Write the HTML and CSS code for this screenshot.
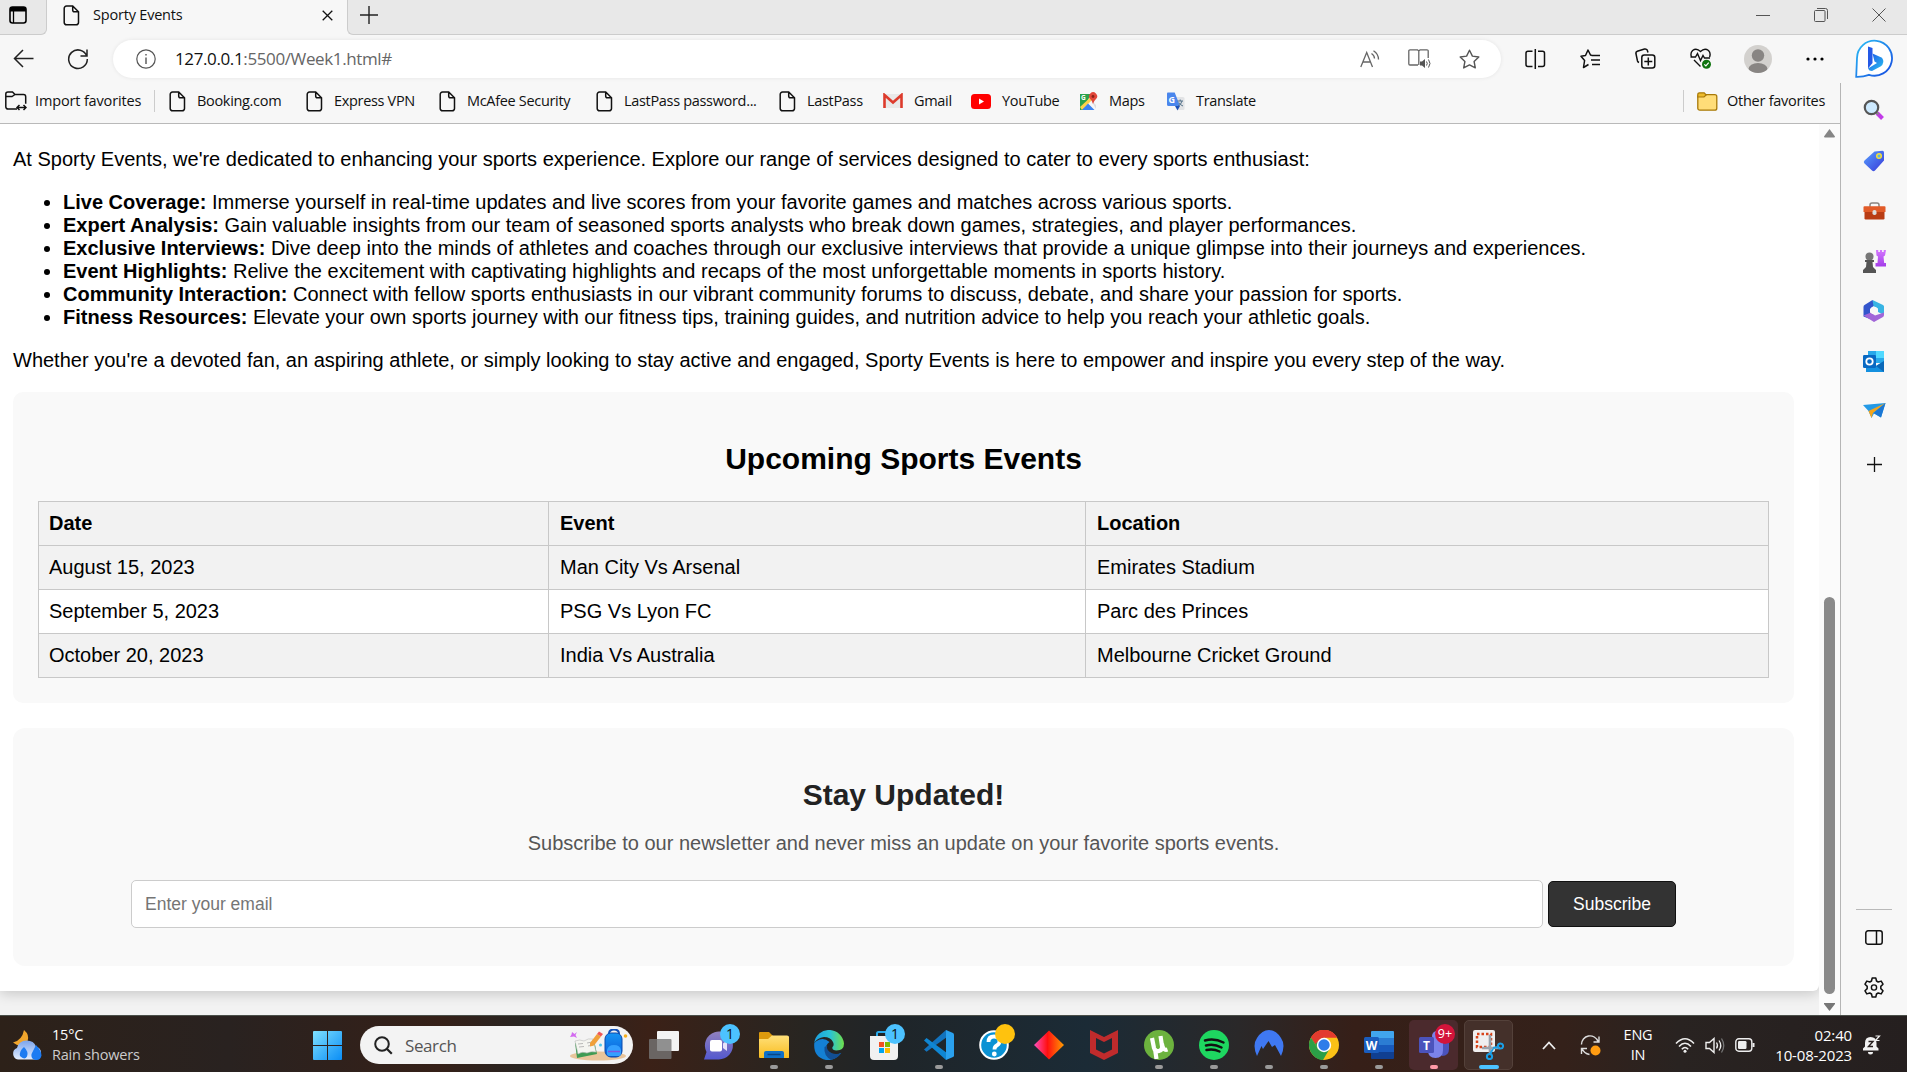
FILE: index.html
```html
<!DOCTYPE html>
<html lang="en">
<head>
<meta charset="utf-8">
<title>Sporty Events</title>
<link rel="stylesheet" href="styles.css">
</head>
<body>
<svg class="defs" width="0" height="0" aria-hidden="true">
  <defs>
    <symbol id="page" viewBox="0 0 17 21"><path d="M3.5 1h6.2L15.500 6.800V17.500a2.300 2.300 0 0 1-2.300 2.300H3.500a2.300 2.300 0 0 1-2.300-2.300V3.300A2.300 2.300 0 0 1 3.500 1zM9.700 1v4.300a1.500 1.500 0 0 0 1.500 1.500h4.300" fill="none" stroke="#111" stroke-width="1.500"/></symbol>
    <linearGradient id="winG" x1="0" y1="0" x2="1" y2="1"><stop offset="0" stop-color="#7fe0ff"/><stop offset="1" stop-color="#0a8df5"/></linearGradient>
    <linearGradient id="folderG" x1="0" y1="0" x2="0" y2="1"><stop offset="0" stop-color="#ffe07a"/><stop offset="1" stop-color="#f9bd1f"/></linearGradient>
    <linearGradient id="edgeTop" x1="0" y1="0" x2="1" y2="0"><stop offset="0" stop-color="#1a9fe0"/><stop offset=".55" stop-color="#2bc3d2"/><stop offset="1" stop-color="#6fe04a"/></linearGradient>
    <linearGradient id="edgeLow" x1="0" y1="0" x2="1" y2="1"><stop offset="0" stop-color="#1c8fe0"/><stop offset="1" stop-color="#0b4f9f"/></linearGradient>
    <linearGradient id="bingG" x1="0" y1="0" x2="1" y2="1"><stop offset="0" stop-color="#1b52e8"/><stop offset="1" stop-color="#2bc4ef"/></linearGradient>
    <linearGradient id="bingRing" x1="0" y1="0" x2="1" y2="1"><stop offset="0" stop-color="#2cc0f5"/><stop offset="1" stop-color="#1548e0"/></linearGradient>
    <linearGradient id="diaG"><stop offset="0" stop-color="#ff4fc0"/><stop offset=".45" stop-color="#ff1010"/><stop offset="1" stop-color="#ff9d00"/></linearGradient>
    <linearGradient id="chatG" x1="0" y1="0" x2="0" y2="1"><stop offset="0" stop-color="#9181bd"/><stop offset="1" stop-color="#5358cf"/></linearGradient>
    <linearGradient id="tagG" x1="0" y1="0" x2="1" y2="1"><stop offset="0" stop-color="#58a2ff"/><stop offset="1" stop-color="#3838d8"/></linearGradient>
    <linearGradient id="cloudG" x1="0" y1="0" x2="0" y2="1"><stop offset="0" stop-color="#7ba4ec"/><stop offset="1" stop-color="#e2edff"/></linearGradient>
    <linearGradient id="rookG" x1="0" y1="0" x2="0" y2="1"><stop offset="0" stop-color="#d477ff"/><stop offset="1" stop-color="#a33de8"/></linearGradient>
    <linearGradient id="packG" x1="0" y1="0" x2="0" y2="1"><stop offset="0" stop-color="#1595f5"/><stop offset="1" stop-color="#0c5bd8"/></linearGradient>
  </defs>
</svg>

<header class="tabstrip">
  <div class="tab-actions"><svg width="18" height="18" viewBox="0 0 18 18"><rect x="1" y="1" width="16" height="16" rx="2.500" fill="none" stroke="#000" stroke-width="1.600"/><path d="M1 3.500Q1 1 3.500 1h11Q17 1 17 3.500V5.500H1z"/><path d="M4.500 5v12" stroke="#000" stroke-width="1.300"/></svg></div>
  <div class="tab">
    <svg width="17" height="21"><use href="#page"/></svg>
    <span class="tab-title">Sporty Events</span>
    <svg width="11" height="11" viewBox="0 0 11 11"><path d="M.700.700l9.600 9.600M10.300.700L.700 10.300" stroke="#111" stroke-width="1.300"/></svg>
  </div>
  <div class="strip-rest">
    <svg width="18" height="18" viewBox="0 0 18 18"><path d="M9 0v18M0 9h18" stroke="#222" stroke-width="1.400"/></svg>
    <div class="window-buttons">
      <svg width="14" height="16" viewBox="0 0 14 16"><path d="M0 8.500h14" stroke="#555"/></svg>
      <svg width="14" height="14" viewBox="0 0 14 14"><rect x=".500" y="2.500" width="10.500" height="11" rx="1" fill="none" stroke="#555"/><path d="M3 .500h8.500a2 2 0 0 1 2 2V11" fill="none" stroke="#555"/></svg>
      <svg width="14" height="14" viewBox="0 0 14 14"><path d="M.500.500l13 13M13.500.500l-13 13" stroke="#555"/></svg>
    </div>
  </div>
</header>

<nav class="toolbar">
  <svg width="21" height="19" viewBox="0 0 21 19"><path d="M20.500 9.500H1.500M10 1L1.500 9.500 10 18" fill="none" stroke="#222" stroke-width="1.500"/></svg>
  <svg width="22" height="22" viewBox="0 0 22 22"><path d="M19.800 8.200A9.300 9.300 0 1 0 20.300 11M20 1.500V8h-6.500" fill="none" stroke="#222" stroke-width="1.500"/></svg>
  <div class="address">
    <svg width="20" height="20" viewBox="0 0 20 20"><circle cx="10" cy="10" r="9.200" fill="none" stroke="#555" stroke-width="1.200"/><path d="M10 8.500V15M10 5v1.600" stroke="#555" stroke-width="1.400"/></svg>
    <span class="url"><b>127.0.0.1</b>:5500/Week1.html#</span>
    <div class="address-icons">
      <svg width="20" height="18" viewBox="0 0 20 18"><path d="M.800 17L6.700 2.500 12.500 17M2.800 12h7.700M11.500 3.500q3 2 3 5M13.500.800q5 3.200 5 8.700" fill="none" stroke="#666" stroke-width="1.300"/></svg>
      <svg width="23" height="21" viewBox="0 0 23 21"><path d="M10 17H2a1.200 1.200 0 0 1-1.200-1.200V3A1.200 1.200 0 0 1 2 1.800h7.500L10.800 3v14M10.800 3l1.300-1.200H19A1.200 1.200 0 0 1 20.200 3v7" fill="none" stroke="#666" stroke-width="1.300"/><path d="M12 13.500h2l3-2.500v9l-3-2.500h-2z" fill="#555"/><path d="M18.500 13.500q1.500 2 0 4M20.500 11.500q3 4 0 8" fill="none" stroke="#555"/></svg>
      <svg width="21" height="20" viewBox="0 0 21 20"><path d="M10.500 1.200l2.900 5.900 6.400.9-4.700 4.500 1.200 6.400-5.800-3-5.800 3 1.200-6.400L1.200 8l6.400-.9z" fill="none" stroke="#555" stroke-width="1.400" stroke-linejoin="round"/></svg>
    </div>
  </div>
  <svg width="21" height="20" viewBox="0 0 21 20"><path d="M7.500 2.300H3A2 2 0 0 0 1 4.300v11.200a2 2 0 0 0 2 2h4.500M10.300 0v20M13 2.300h4.500a2 2 0 0 1 2 2v11.200a2 2 0 0 1-2 2H13" fill="none" stroke="#111" stroke-width="1.500"/></svg>
  <svg width="21" height="20" viewBox="0 0 21 20"><path d="M12 6.500L10.500 6 8 1 5.500 6.500 1 7.300 4.600 11.500 3.500 18.500 8.500 15.500M12 6.500h8M11 11h9M12 15.500h8" fill="none" stroke="#111" stroke-width="1.500" stroke-linejoin="round"/></svg>
  <svg width="21" height="21" viewBox="0 0 21 21"><path d="M4 14.500Q2.800 14 2.500 13L.900 5.500Q.700 3.800 2.300 3.200L9.500 1q2-.300 2.800 1.200l.700 2.300" fill="none" stroke="#111" stroke-width="1.500"/><rect x="6.800" y="7" width="13" height="13" rx="2.500" fill="none" stroke="#111" stroke-width="1.500"/><path d="M13.300 9.500v8M9.300 13.500h8" stroke="#111" stroke-width="1.500"/></svg>
  <svg width="22" height="21" viewBox="0 0 22 21"><path d="M1.500 9Q0 5 2.600 2.500 6.500-.500 10.500 3.500 14.500-.500 18.500 2.500 21 5 19.600 9M.500 9h5l2-3.500 3 7L13 7.500l1.500 2.500H20M4 12l6.500 6.500" fill="none" stroke="#111" stroke-width="1.400"/><circle cx="16.500" cy="16.300" r="4.500" fill="#107510"/><path d="M14.300 16.300l1.600 1.600 2.800-3.200" fill="none" stroke="#fff" stroke-width="1.200"/></svg>
  <svg width="28" height="28" viewBox="0 0 28 28"><defs><clipPath id="av"><circle cx="14" cy="14" r="14"/></clipPath></defs><g clip-path="url(#av)"><rect width="28" height="28" fill="#d3d1ce"/><circle cx="14" cy="10.500" r="6.200" fill="#888583"/><ellipse cx="14" cy="24" rx="9.500" ry="6" fill="#888583"/></g></svg>
  <svg width="18" height="4" viewBox="0 0 18 4"><circle cx="2" cy="2" r="1.600"/><circle cx="9" cy="2" r="1.600"/><circle cx="16" cy="2" r="1.600"/></svg>
  <svg width="38" height="39" viewBox="0 0 38 39"><path d="M1.200 37.800L2 19A17.500 17.500 0 1 1 14 35.800Q8 38 1.200 37.800z" fill="#fff" stroke="url(#bingRing)" stroke-width="1.800"/><path d="M13 7.500l4.500 1.600v15l-4.500 5.400z" fill="#2459e6"/><path d="M17.500 14.500l9.500 4.300q3.500 5-1.500 8.700L17 32q-3 0-4-2.500l9-5.500-2.500-1.500z" fill="url(#bingG)"/></svg>
</nav>

<div class="workspace">
  <div class="viewport">
    <div class="favorites">
      <a class="fav fav-import"><svg width="22" height="21" viewBox="0 0 22 21"><path d="M12 18H3a2.200 2.200 0 0 1-2.200-2.200V3Q.800 1 3 1h4.500l2.500 2.500H18.500a2.200 2.200 0 0 1 2.200 2.200v7M1 5.500h6L10 3.500" fill="none" stroke="#111" stroke-width="1.500"/><path d="M12.500 16.500h8.500M14.500 14l-2.500 2.500 2.500 2.500M18.500 14l2.500 2.500-2.500 2.500" fill="none" stroke="#111" stroke-width="1.500"/></svg><span>Import favorites</span></a>
      <a class="fav"><svg width="17" height="21"><use href="#page"/></svg><span>Booking.com</span></a>
      <a class="fav"><svg width="17" height="21"><use href="#page"/></svg><span>Express VPN</span></a>
      <a class="fav"><svg width="17" height="21"><use href="#page"/></svg><span>McAfee Security</span></a>
      <a class="fav"><svg width="17" height="21"><use href="#page"/></svg><span>LastPass password...</span></a>
      <a class="fav"><svg width="17" height="21"><use href="#page"/></svg><span>LastPass</span></a>
      <a class="fav"><svg width="20" height="16" viewBox="0 0 20 16"><rect x="1" y="1" width="18" height="14" fill="#e9e9e9"/><path d="M1.500 15V2L10 9.500 18.500 2v13" fill="none" stroke="#dd3b2c" stroke-width="2.600"/></svg><span>Gmail</span></a>
      <a class="fav"><svg width="20" height="15" viewBox="0 0 20 15"><rect width="20" height="15" rx="3.500" fill="#f00"/><path d="M8 4.500v6l5-3z" fill="#fff"/></svg><span>YouTube</span></a>
      <a class="fav"><svg width="19" height="19" viewBox="0 0 19 19"><path d="M1 2h11l-8 16H1z" fill="#2ba24c"/><path d="M1 15L14 3l2 2L3 18z" fill="#fdd34a"/><path d="M3 18l6-6.500 6.500 6.500z" fill="#3b82f0"/><path d="M12 8l5 5v4z" fill="#ddd"/><text x="2" y="8" font-size="6.500" font-weight="700" fill="#fff">G</text><path d="M14 12q-.500-3-2.800-5A4 4 0 1 1 17 7q-2.300 2-3 5z" fill="#e1473a"/><circle cx="14" cy="4.500" r="1.400" fill="#8c2118"/></svg><span>Maps</span></a>
      <a class="fav"><svg width="19" height="19" viewBox="0 0 19 19"><path d="M8 5h9a1.500 1.500 0 0 1 1.500 1.500v10A1.500 1.500 0 0 1 17 18H12z" fill="#e2e3e5"/><path d="M1.500.500h7.200L14 14H2.500A1.500 1.500 0 0 1 1 12.500v-11z" fill="#4a86ec"/><path d="M9 14h5l-2.500 4.500z" fill="#1b4fb8"/><text x="2.500" y="10.500" font-size="9" font-weight="700" fill="#fff">G</text><path d="M11.500 9h5.500M14.200 7.500V9M16 9q-1 4-4 5M13 10.500q1 2.500 4 3.500" fill="none" stroke="#54728a"/></svg><span>Translate</span></a>
      <a class="fav fav-other"><svg width="21" height="19" viewBox="0 0 21 19"><rect x=".800" y="2.700" width="19" height="15.500" rx="2" fill="#ffdd78" stroke="#a87908" stroke-width="1.300"/><path d="M.800 4.500V2.500Q.800.800 2.500.800h4.700L9.200 3 7 5H.800z" fill="#edbb2c" stroke="#a87908" stroke-width="1.200"/></svg><span>Other favorites</span></a>
    </div>

    <div class="scroller">
      <main class="document">
        <p>At Sporty Events, we're dedicated to enhancing your sports experience. Explore our range of services designed to cater to every sports enthusiast:</p>
        <ul>
          <li><b>Live Coverage:</b> Immerse yourself in real-time updates and live scores from your favorite games and matches across various sports.</li>
          <li><b>Expert Analysis:</b> Gain valuable insights from our team of seasoned sports analysts who break down games, strategies, and player performances.</li>
          <li><b>Exclusive Interviews:</b> Dive deep into the minds of athletes and coaches through our exclusive interviews that provide a unique glimpse into their journeys and experiences.</li>
          <li><b>Event Highlights:</b> Relive the excitement with captivating highlights and recaps of the most unforgettable moments in sports history.</li>
          <li><b>Community Interaction:</b> Connect with fellow sports enthusiasts in our vibrant community forums to discuss, debate, and share your passion for sports.</li>
          <li><b>Fitness Resources:</b> Elevate your own sports journey with our fitness tips, training guides, and nutrition advice to help you reach your athletic goals.</li>
        </ul>
        <p>Whether you're a devoted fan, an aspiring athlete, or simply looking to stay active and engaged, Sporty Events is here to empower and inspire you every step of the way.</p>
        <section class="card events">
          <h2>Upcoming Sports Events</h2>
          <table>
            <colgroup><col class="col-date"><col class="col-event"><col></colgroup>
            <tr><th>Date</th><th>Event</th><th>Location</th></tr>
            <tr><td>August 15, 2023</td><td>Man City Vs Arsenal</td><td>Emirates Stadium</td></tr>
            <tr><td>September 5, 2023</td><td>PSG Vs Lyon FC</td><td>Parc des Princes</td></tr>
            <tr><td>October 20, 2023</td><td>India Vs Australia</td><td>Melbourne Cricket Ground</td></tr>
          </table>
        </section>
        <section class="card newsletter">
          <h2>Stay Updated!</h2>
          <p>Subscribe to our newsletter and never miss an update on your favorite sports events.</p>
          <form class="subscribe">
            <input type="email" placeholder="Enter your email">
            <button type="button">Subscribe</button>
          </form>
        </section>
      </main>
      <div class="scrollbar">
        <svg width="11" height="9" viewBox="0 0 11 9"><path d="M5.500 0L11 7.500Q11 8.500 10 8.500H1Q0 8.500 0 7.500z" fill="#858585"/></svg>
        <div class="thumb"></div>
        <svg width="11" height="8" viewBox="0 0 11 8"><path d="M0 0h11v1L5.500 8 0 1z" fill="#777"/></svg>
      </div>
    </div>
  </div>

  <aside class="sidebar">
    <svg width="22" height="22" viewBox="0 0 22 22"><path d="M14 14l5.500 5.500" stroke="#c23be8" stroke-width="4"/><path d="M13 13l2.500 2.500" stroke="#888" stroke-width="2"/><circle cx="8.500" cy="8.500" r="6.700" fill="#cdeaff" stroke="#555" stroke-width="2.200"/></svg>
    <svg width="22" height="22" viewBox="0 0 22 22"><path d="M11.500 1.500L19.500.800Q21 .800 21 2.500L21 10.500 12 20.500Q10.500 22 9 20.500L1.500 13.500Q0 12 1.500 10.500z" fill="url(#tagG)"/><circle cx="16" cy="6" r="2.300" fill="#5ab0f0" stroke="#f4df35" stroke-width="1.500"/></svg>
    <svg width="23" height="18" viewBox="0 0 23 18"><path d="M7 5V3Q7 1 9 1h5q2 0 2 2v2" fill="none" stroke="#8a8480" stroke-width="1.500"/><rect x="1.500" y="8" width="20" height="9.500" rx="1.200" fill="#b93c14"/><path d="M.500 5Q.500 4.300 1.500 4.300h20q1 0 1 .700v5H.500z" fill="#e25b28"/><rect x="9.500" y="8" width="4" height="5" rx="1.800" fill="#ddd"/></svg>
    <svg width="24" height="23" viewBox="0 0 24 23"><path d="M14 0h2.300v2h1.600V0h2.200v2h1.600V0H24l-1 5.500-1.500 1 .700 6.500H24v3.500H13.500V13h2L16 6.500l-1.500-1z" fill="url(#rookG)"/><circle cx="7.500" cy="6.500" r="4" fill="#777"/><path d="M3 10h9v2H10.500l.500 5 3 3v3H1v-3l3-3 .500-5H3z" fill="#555"/></svg>
    <svg width="22" height="22" viewBox="0 0 22 22"><path d="M9.500 0L20 5q1 .500 1 1.500V15l-6-3V8.500L8 5z" fill="#38b4e4"/><path d="M9.500 0L1.500 5Q.500 5.500.500 7v9.500L7 19V9l3.500-3z" fill="#3355cc"/><path d="M.500 15.500L8 12.500l4 3 9-3V15q0 1.500-1 2l-9 5z" fill="#a166d8"/><circle cx="11" cy="10.500" r="3.800" fill="#f8f8f8"/></svg>
    <svg width="22" height="21" viewBox="0 0 22 21"><rect x="5" y="0" width="16" height="12" fill="#28a8ea"/><path d="M13 0h8v7h-8z" fill="#50d9ff"/><path d="M3 10l10 5 8-5v11H3z" fill="#1490df"/><path d="M13 15l8-5v11z" fill="#0a68b8"/><rect x="0" y="4" width="13" height="13" rx="1.200" fill="#0869c3"/><circle cx="6.500" cy="10.500" r="3.200" fill="none" stroke="#fff" stroke-width="1.800"/></svg>
    <svg width="23" height="16" viewBox="0 0 23 16"><path d="M0 2L22.500 0 18 14.500 11 10.500 8.500 15 5.500 8z" fill="#249ae6"/><path d="M5.500 8L22.500 0 10 10 8.500 15z" fill="#f4a51c"/><path d="M10.500 10L22.500 0 18 14.500z" fill="#1b77d4"/></svg>
    <svg width="15" height="15" viewBox="0 0 15 15"><path d="M7.500 0v15M0 7.500h15" stroke="#111" stroke-width="1.300"/></svg>
    <div class="sidebar-foot">
      <svg width="18" height="15" viewBox="0 0 18 15"><rect x=".800" y=".800" width="16.400" height="13.400" rx="2.300" fill="none" stroke="#111" stroke-width="1.500"/><path d="M11.500 1v13" stroke="#111" stroke-width="1.500"/></svg>
      <svg width="22" height="22" viewBox="0 0 22 22"><path d="M9.200 1h3.600l.700 3 1.700 1 3-.900 1.800 3.100-2.200 2.200v2.200l2.200 2.200-1.800 3.100-3-.900-1.700 1-.700 3H9.200l-.700-3-1.700-1-3 .900L2 13.800l2.200-2.200V9.400L2 7.200l1.800-3.100 3 .900 1.700-1z" fill="none" stroke="#111" stroke-width="1.500" stroke-linejoin="round"/><circle cx="11" cy="10.500" r="2.600" fill="none" stroke="#111" stroke-width="1.400"/></svg>
    </div>
  </aside>
</div>

<footer class="taskbar">
  <div class="weather">
    <svg width="31" height="31" viewBox="0 0 31 31"><path d="M12 0q6 5 3.500 11.500Q9 19 1 12.500 10 10.500 12 0z" fill="#f0a52c"/><path d="M6 29.500a6 6 0 0 1-1-11.500Q7 10.500 14.500 10.500T24 16.500a6.800 6.800 0 0 1 .500 13z" fill="url(#cloudG)"/><path d="M12 17q5 5 3 9.500-2.500 4-7-.500Q7 21 12 17zM24 15q5.500 6 5.500 10.500-1 5-6 4.500-5-1-4-6z" fill="#1c7bf2"/></svg>
    <div class="weather-text"><span>15°C</span><span>Rain showers</span></div>
  </div>
  <svg class="start" width="29" height="29" viewBox="0 0 29 29"><path d="M0 1q0-1 1-1h13v14H0zM15 0h13q1 0 1 1v13H15zM0 15h14v14H1q-1 0-1-1zM15 15h14v13q0 1-1 1H15z" fill="url(#winG)"/></svg>
  <div class="search">
    <svg width="19" height="19" viewBox="0 0 19 19"><circle cx="8" cy="8" r="6.800" fill="none" stroke="#222" stroke-width="2"/><path d="M12.800 12.800l5 5" stroke="#222" stroke-width="2.200"/></svg>
    <span>Search</span>
    <svg width="60" height="32" viewBox="0 0 60 32"><ellipse cx="29" cy="27" rx="28" ry="4.500" fill="#e9c59b"/><path d="M3 3l2.500 2L8 3 6.500 6 8 9 5 7.500 1 8l1.500-2.500z" fill="#d36af0"/><path d="M6 14l19-3 3 14-20 4z" fill="#3f9b53"/><path d="M6 12q5-2 9 0 4-3 9-2l3 13q-5-1-9 1-5-2-9 1z" fill="#f4f5f0" stroke="#bbb" stroke-width=".600"/><path d="M9 15l5-.500M10 18l5-.500M18 14l5-1M19 17l5-1" stroke="#aaa" stroke-width=".800"/><path d="M21 14l7-9 4 2.500-7 9-4 1z" fill="#f0a03a"/><path d="M28 5l2-2.500 4 2.500-2 2.500z" fill="#e55"/><circle cx="31.500" cy="16" r="1.500" fill="#4cc8ef"/><path d="M40 5q0-4.500 5-4.500T50 5" fill="none" stroke="#1251b8" stroke-width="2"/><rect x="36" y="4" width="17" height="24" rx="6" fill="url(#packG)" stroke="#0d4aac"/><path d="M38 21q1-5 7-5t7 5v4q0 2-2 2H40q-2 0-2-2z" fill="#34a0ff"/><path d="M39 22.500h12" stroke="#7a57e0" stroke-width="1.500"/><circle cx="56.500" cy="7" r="1.800" fill="#f6b01e"/></svg>
  </div>
  <div class="apps">
    <div class="app"><svg width="30" height="28" viewBox="0 0 30 28"><rect x="8" y="0" width="22" height="20" rx="1" fill="#f4f4f4"/><rect x="0" y="8" width="22.500" height="20" rx="1" fill="#777" opacity=".8"/></svg></div>
    <div class="app"><svg width="29" height="29" viewBox="0 0 29 29"><path d="M0 28.500L2.500 21A14 14 0 1 1 14.500 28.500z" fill="url(#chatG)"/><rect x="6" y="9" width="12" height="11.500" rx="2" fill="#fff"/><path d="M19 12.500l4-3v10.500l-4-3z" fill="#e6e3fa"/></svg><span class="count">1</span></div>
    <div class="app running"><svg width="30" height="28" viewBox="0 0 30 28"><path d="M0 2Q0 1 1 1h9l3.500 3.500V9H0z" fill="#dc9a0d"/><path d="M0 8h9l4-3.500h15q2 0 2 1.500v20.500q0 .500-1 .500H1q-1 0-1-1z" fill="url(#folderG)"/><path d="M5 27v-5q0-2 2-2h16q2 0 2 2v5z" fill="#0f70c8"/><path d="M8.500 23.500h13" stroke="#0a4684" stroke-width="1.500"/></svg></div>
    <div class="app running"><svg width="30" height="30" viewBox="0 0 30 30"><path d="M.300 13Q-1 27 12 30q9 1 15-7-6 3-11.500 0-5-3-3-7.500 1-2.500 3-3.500-5-4.500-10-2.500-4 1.500-5.200 3.500z" fill="#1480d4"/><path d="M.200 13A15 15 0 0 1 30 13.500q0 7-7.500 7-5 0-4-3.500 2-2 .500-5Q16.500 7 10 7 3 8 .200 13z" fill="url(#edgeTop)"/><path d="M10.500 17q-1 9 6.500 12.800Q24 28.500 27.500 22.800q-5 2.500-10 .200-5.500-3-4.300-7.500z" fill="#124f94"/></svg></div>
    <div class="app"><svg width="30" height="30" viewBox="0 0 30 30"><path d="M8 7V3.500Q8 2 9.500 2H21" fill="none" stroke="#28a9ea" stroke-width="2"/><path d="M1 6h28v20q0 4-4 4H5q-4 0-4-4z" fill="#f1f1f1"/><path d="M10 12h5v5h-5z" fill="#f25022"/><path d="M16 12h5v5h-5z" fill="#7fba00"/><path d="M10 18h5v5h-5z" fill="#00a4ef"/><path d="M16 18h5v5h-5z" fill="#ffb900"/></svg><span class="count">1</span></div>
    <div class="app running"><svg width="30" height="30" viewBox="0 0 30 30"><path d="M22 0L0 19.500l2.500 2.300L23 7z" fill="#1273be"/><path d="M22 30L0 10.500 2.500 8 23 23z" fill="#0f86d3"/><path d="M22 0l7 3Q30 3.500 30 4.500v21q0 1-1 1.500l-7 3z" fill="#2aa1ee"/></svg></div>
    <div class="app"><svg width="30" height="30" viewBox="0 0 30 30"><circle cx="15" cy="15" r="13.800" fill="#0b92d4" stroke="#fff" stroke-width="2"/><path d="M9.500 12q0-5.500 5.500-5.500t5.500 4.700q0 2.800-2.800 4.300-2.200 1.200-2.200 4" fill="none" stroke="#fff" stroke-width="3.800"/><circle cx="15.300" cy="24" r="2.400" fill="#fff"/></svg><span class="count alert"></span></div>
    <div class="app"><svg width="30" height="30" viewBox="0 0 30 30"><path d="M15 .500L30 15 15 29.500 0 15z" fill="url(#diaG)"/></svg></div>
    <div class="app"><svg width="28" height="30" viewBox="0 0 28 30"><path d="M0 0L14 7 28 0v23L14 30 0 23zM6 8v11.500l8 4 8-4V8l-8 4z" fill="#c02b2c" fill-rule="evenodd"/></svg></div>
    <div class="app running"><svg width="30" height="30" viewBox="0 0 30 30"><circle cx="15" cy="15" r="15" fill="#6cb23e"/><path d="M8 8l2 10q1 4 5 3t3-5L16.500 6M18 14q1 7 5.500 5.500M11 19l1.500 10" fill="none" stroke="#fff" stroke-width="4.200"/></svg></div>
    <div class="app running"><svg width="30" height="30" viewBox="0 0 30 30"><circle cx="15" cy="15" r="15" fill="#1ed760"/><path d="M6 10.500q9.500-2.500 18.500 2M7 15.500q8-2 15.500 2M7.500 20q7-1.500 13 1.500" fill="none" stroke="#111" stroke-width="2.500" stroke-linecap="round"/></svg></div>
    <div class="app running"><svg width="30" height="30" viewBox="0 0 30 30"><path d="M3 26Q-2 15 3 8 8 0 15 0t12 8q5 7 0 18l-6-11-3 2-3.500-6L9 19l-1.500-3z" fill="#3f78f2"/></svg></div>
    <div class="app running"><svg width="30" height="30" viewBox="0 0 30 30"><circle cx="15" cy="15" r="15" fill="#fbc116"/><path d="M2 7.500A15 15 0 0 1 28 7.500H15z" fill="#e33b2e"/><path d="M2 7.500A15 15 0 0 0 14 30l6.500-11H9z" fill="#2b9f47"/><path d="M2 7.500L9 19l6-11.500z" fill="#2b9f47"/><path d="M2 7.500Q6 0 15 0t13 7.500H15L9.500 11 6.500 14z" fill="#e33b2e"/><circle cx="15" cy="15" r="7.200" fill="#fff"/><circle cx="15" cy="15" r="5.700" fill="#2d7de9"/></svg></div>
    <div class="app running"><svg width="30" height="28" viewBox="0 0 30 28"><path d="M7 1q0-1 1-1h21q1 0 1 1v6H7z" fill="#41a5ee"/><path d="M7 7h23v7H7z" fill="#2b7cd3"/><path d="M7 14h23v7H7z" fill="#185abd"/><path d="M7 21h23v6q0 1-1 1H8q-1 0-1-1z" fill="#103f91"/><rect y="6" width="15" height="16" rx="1.500" fill="#1a5dbe"/><text x="7.500" y="18.500" text-anchor="middle" font-size="12" font-weight="700" fill="#fff">W</text></svg></div>
    <div class="app running teams"><svg width="30" height="28" viewBox="0 0 30 28"><circle cx="18" cy="5" r="5" fill="#7b83eb"/><path d="M17 9h13v9q0 7-7 7z" fill="#4b53bc"/><path d="M9 9h15v10q0 8-7.500 8T9 19z" fill="#7b83eb"/><rect y="6" width="15" height="16" rx="1.500" fill="#4b53bc"/><text x="7.500" y="18.500" text-anchor="middle" font-size="12" font-weight="700" fill="#fff">T</text></svg><span class="count many">9+</span></div>
    <div class="app running active"><svg width="31" height="30" viewBox="0 0 31 30"><rect width="22" height="22" rx="2" fill="#f0f0f0"/><rect x="4" y="4" width="14" height="13" fill="none" stroke="#d8431a" stroke-width="2.500" stroke-dasharray="2.500 2"/><path d="M17 5v19M9 18h18" stroke="#9aa3ac" stroke-width="2.600"/><circle cx="16.500" cy="26.500" r="2.600" fill="none" stroke="#1a9fe6" stroke-width="2"/><circle cx="27.500" cy="16" r="2.600" fill="none" stroke="#1a9fe6" stroke-width="2"/><path d="M17 24l3-5M20 18l5-1" stroke="#1a9fe6" stroke-width="2"/></svg></div>
  </div>
  <div class="tray">
    <svg width="14" height="9" viewBox="0 0 14 9"><path d="M1 8l6-6.500L13 8" fill="none" stroke="#eee" stroke-width="1.800"/></svg>
    <svg width="21" height="21" viewBox="0 0 21 21"><path d="M1.500 9.500a8.500 8.500 0 0 1 16.500-3M19 1.500V7h-5.500M1.500 19v-5.500H7M2 13.500q2 5 7.500 6" fill="none" stroke="#ddd" stroke-width="1.400"/><circle cx="15.500" cy="15.500" r="5" fill="#ff9c12"/></svg>
    <div class="lang"><span>ENG</span><span>IN</span></div>
    <svg width="20" height="16" viewBox="0 0 20 16"><path d="M1 6.500q9-9.500 18 0M4 9.500q6-6.500 12 0M6.800 12.200q3.200-3.500 6.400 0" fill="none" stroke="#eee" stroke-width="1.500"/><circle cx="10" cy="14.300" r="1.500" fill="#eee"/></svg>
    <svg width="20" height="17" viewBox="0 0 20 17"><path d="M1 5.500h3.500L9 1.500v14l-4.500-4H1z" fill="none" stroke="#eee" stroke-width="1.400"/><path d="M11.500 5.500q2 3 0 6M14 3.500q3.500 5 0 10" fill="none" stroke="#eee" stroke-width="1.300"/><path d="M16.500 1.500q4.500 7 0 14" fill="none" stroke="#777" stroke-width="1.300"/></svg>
    <svg width="20" height="14" viewBox="0 0 20 14"><rect x=".800" y=".800" width="16" height="12.400" rx="3" fill="none" stroke="#eee" stroke-width="1.400"/><rect x="3" y="3" width="8.500" height="8" rx="1.200" fill="#eee"/><path d="M18.500 5v4" stroke="#eee" stroke-width="2"/></svg>
    <div class="clock"><span>02:40</span><span>10-08-2023</span></div>
    <svg class="bell" width="19" height="20" viewBox="0 0 19 20"><path d="M1 15.500V13.500l2-2V8q0-6 5.500-6 6 0 6 6v3.500l2 2v2zM6 17h5q0 2.500-2.500 2.500T6 17z" fill="#f2f2f2"/><path d="M6.500 6.500h4.500l-4.500 5h4.500" fill="none" stroke="#28201f" stroke-width="1.400"/><path d="M13.500 1h4l-4 4.500h4" fill="none" stroke="#f2f2f2" stroke-width="1.200"/></svg>
  </div>
</footer>
</body>
</html>
```
FILE: styles.css
```css
* { box-sizing: border-box; }

body {
  margin: 0;
  width: 1907px;
  height: 1072px;
  overflow: hidden;
  display: flex;
  flex-direction: column;
  background: #f7f7f7;
  font-family: "Open Sans", "Noto Sans", sans-serif;
  font-size: 14.5px;
  color: #111;
}

svg { display: block; flex: none; }
.defs { position: absolute; }

/* Tab strip */
.tabstrip { display: flex; height: 35px; flex: none; background: #f7f7f7; }
.tab-actions {
  width: 47px;
  padding: 6px 0 0 9px;
  background: #e8e8e8;
  border-right: 1px solid #ccc;
  border-bottom: 1px solid #ccc;
  border-bottom-right-radius: 6px;
}
.tab {
  width: 300px;
  padding: 0 14px 5px 16px;
  display: flex;
  align-items: center;
}
.tab-title { flex: 1; margin-left: 13px; padding-bottom: 1px; letter-spacing: -.2px; }
.strip-rest {
  flex: 1;
  display: flex;
  justify-content: space-between;
  align-items: center;
  padding: 0 21px 5px 12px;
  background: #e8e8e8;
  border-left: 1px solid #ccc;
  border-bottom: 1px solid #ccc;
  border-bottom-left-radius: 6px;
}
.window-buttons { display: flex; align-items: center; gap: 44px; }

/* Toolbar */
.toolbar {
  height: 48px;
  flex: none;
  padding-bottom: 1px;
  display: grid;
  grid-template-columns: 46px 64px 1398px 55px 55px 55px 56px 58px 56px 62px;
  align-items: center;
  justify-items: center;
}
.address {
  width: 1388px;
  height: 38px;
  margin-right: 4px;
  padding: 0 21px 0 23px;
  display: flex;
  align-items: center;
  border-radius: 19px;
  background: #fff;
  box-shadow: 0 0 4px rgba(0, 0, 0, .08);
}
.url { flex: 1; margin-left: 19px; font-size: 17px; letter-spacing: -.38px; color: #666; }
.url b { font-weight: 400; color: #111; }
.address-icons { display: flex; align-items: center; gap: 28px; }

/* Workspace */
.workspace { flex: 1; min-height: 0; display: flex; }
.viewport { width: 1840px; display: flex; flex-direction: column; }
.favorites {
  height: 41px;
  flex: none;
  padding-bottom: 4px;
  display: grid;
  grid-template-columns: 164px 137px 133px 157px 183px 104px 88px 108px 87px 522px 156px;
  align-items: center;
  border-bottom: 1px solid #b9b9b9;
}
.fav { display: flex; align-items: center; gap: 11px; padding-left: 5px; height: 22px; white-space: nowrap; letter-spacing: -.32px; }
.fav span { padding-bottom: 1px; }
.fav-import { width: 155px; gap: 8px; letter-spacing: -.15px; border-right: 1px solid #ccc; }
.fav-other { padding-left: 13px; gap: 9px; letter-spacing: -.25px; border-left: 1px solid #ccc; }

.scroller { flex: 1; min-height: 0; display: flex; background: #f2f2f2; }
.document {
  width: 1819px;
  height: 867px;
  padding: 24px 25px 25px 13px;
  background: #fff;
  border-bottom-right-radius: 6px;
  box-shadow: 0 2px 14px rgba(0, 0, 0, .2);
  font: 20px/23px "Liberation Sans", Arial, sans-serif;
  color: #000;
  clip-path: inset(0 0 -30px 0);
}
.document p { margin: 0; }
.document ul { margin: 20px 0; padding-left: 50px; }

.card { background: #f9f9f9; border-radius: 10px; text-align: center; }
.card h2 { margin: 0; font-size: 30px; line-height: 35px; }
.events { height: 311px; margin-top: 20px; padding: 49px 25px 25px; }
table { width: 1731px; margin-top: 25px; border-collapse: collapse; table-layout: fixed; background: #fff; text-align: left; }
.col-date { width: 510px; }
.col-event { width: 537px; }
th, td { height: 44px; padding: 0 10px; border: 1px solid #c8c8c8; }
th + th, td + td { padding-left: 11px; }
tr:nth-child(even), tr:first-child, tr:last-child { background: #f2f2f2; }

.newsletter { height: 238px; margin-top: 25px; padding: 49px 118px; border-radius: 12px; }
.newsletter h2 { color: #222; }
.newsletter p { margin-top: 20px; color: #555; }
.subscribe { display: flex; align-items: center; gap: 5px; margin-top: 25px; }
.subscribe input, .subscribe button { font: 17.5px "Liberation Sans", Arial, sans-serif; border-radius: 5px; }
.subscribe input { width: 1412px; height: 48px; padding: 0 13px; border: 1px solid #ccc; background: #fff; }
.subscribe input::placeholder { color: #757575; }
.subscribe button { width: 128px; height: 46px; padding: 0; border: 1px solid #111; background: #333; color: #fff; }

.scrollbar { width: 21px; padding: 5px 5px 4px; display: flex; flex-direction: column; align-items: center; background: #fbfbfb; }
.thumb { width: 11px; height: 397px; margin-top: auto; margin-bottom: 9px; border-radius: 6px; background: #8a8a8a; }

/* Sidebar */
.sidebar {
  width: 67px;
  padding-top: 1px;
  display: grid;
  grid-template-rows: 52px 50px 50px 50px 50px 50px 50px 57px 1fr;
  align-items: center;
  justify-items: center;
  border-left: 1px solid #b5b5b5;
}
.sidebar-foot {
  align-self: end;
  width: 36px;
  height: 106px;
  padding: 20px 0 16px;
  display: flex;
  flex-direction: column;
  align-items: center;
  justify-content: space-between;
  border-top: 1px solid #b9b9b9;
}

/* Taskbar */
.taskbar {
  height: 57px;
  flex: none;
  padding-top: 2px;
  display: flex;
  align-items: center;
  border-top: 1px solid #4a4f49;
  background: linear-gradient(90deg, #2d2119, #292220 12%, #352018 23%, #272523 28%, #3b2117 34%, #282521 42%, #1f2529 47%, #1b2b36 57%, #2a2829 65%, #361f18 71%, #34211a 82%, #292321 88%, #251f1f);
  color: #fff;
}
.weather { width: 313px; padding-left: 12px; display: flex; align-items: center; gap: 9px; }
.weather-text, .lang, .clock { display: flex; flex-direction: column; line-height: 20px; font-size: 14.5px; letter-spacing: -.2px; }
.weather-text span:last-child { color: #ccc; }
.search {
  width: 273px;
  height: 38px;
  margin-left: 18px;
  padding: 0 4px 0 14px;
  display: flex;
  align-items: center;
  border-radius: 19px;
  background: #f3f3f3;
  color: #555;
  font-size: 17px;
  letter-spacing: -.4px;
}
.search span { flex: 1; margin-left: 12px; }
.apps { display: grid; grid-template-columns: repeat(16, 55px); margin-left: 3px; }
.app { position: relative; width: 49px; height: 50px; margin-left: 3px; display: flex; align-items: center; justify-content: center; border-radius: 5px; }
.running::after { content: ""; position: absolute; left: 21px; bottom: 1px; width: 8px; height: 4px; border-radius: 2px; background: #9a9a9a; }
.teams { background: #4b2a2d; }
.teams::after { background: #ff9aa8; }
.active { background: #44302a; border: 1px solid #54413a; }
.active::after { left: 14px; bottom: 0; width: 20px; background: #4cc2ff; }
.count {
  position: absolute;
  left: 26px;
  top: 4px;
  width: 20px;
  height: 20px;
  border-radius: 50%;
  background: #4cc2ff;
  color: #111;
  text-align: center;
  font-size: 14px;
  line-height: 20px;
}
.alert { background: #ffc20e; }
.many { background: #d3143b; color: #fff; font-size: 12.5px; }

.tray {
  flex: none;
  display: grid;
  grid-template-columns: 36px 46px 50px 44px 16px 44px 85px 38px;
  align-items: center;
  justify-items: center;
  margin-left: 15px;
}
.lang { align-items: center; }
.clock { align-items: flex-end; justify-self: end; font-size: 15px; letter-spacing: -.15px; }
```
